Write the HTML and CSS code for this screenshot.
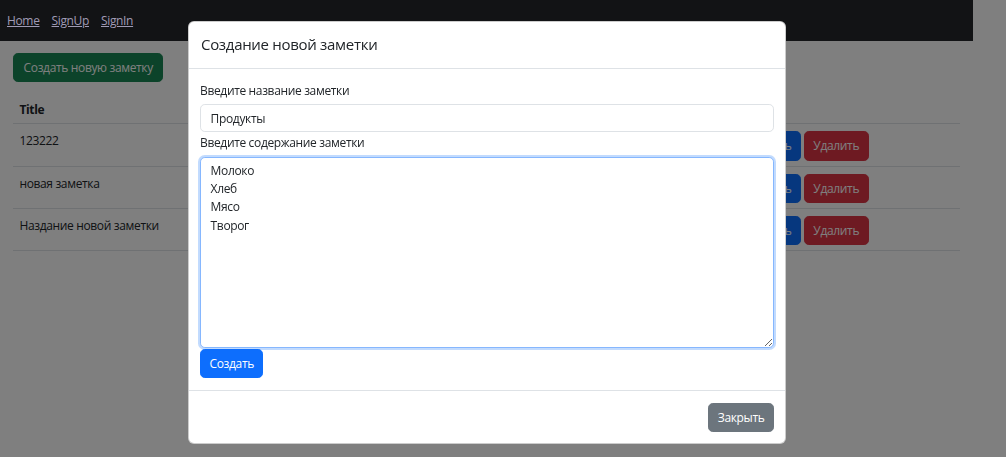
FILE: index.html
```html
<!DOCTYPE html>
<html lang="ru">
<head>
<meta charset="utf-8">
<title>Notes</title>
<link rel="stylesheet" href="styles.css">
</head>
<body>
<nav class="navbar">
  <a href="#" class="nav-link">Home</a>
  <a href="#" class="nav-link">SignUp</a>
  <a href="#" class="nav-link">SignIn</a>
</nav>
<main class="main">
  <button class="btn btn-success">Создать новую заметку</button>
  <table class="notes">
    <thead>
      <tr><th>Title</th><th class="actions"></th><th class="tail"></th></tr>
    </thead>
    <tbody>
      <tr><td>123222</td><td class="actions"><button class="btn btn-primary">Изменить</button> <button class="btn btn-danger">Удалить</button></td><td class="tail"></td></tr>
      <tr><td>новая заметка</td><td class="actions"><button class="btn btn-primary">Изменить</button> <button class="btn btn-danger">Удалить</button></td><td class="tail"></td></tr>
      <tr><td>Наздание новой заметки</td><td class="actions"><button class="btn btn-primary">Изменить</button> <button class="btn btn-danger">Удалить</button></td><td class="tail"></td></tr>
    </tbody>
  </table>
</main>
<div class="backdrop"></div>
<div class="modal">
  <div class="modal-header">
    <h5 class="modal-title">Создание новой заметки</h5>
  </div>
  <div class="modal-body">
    <label class="form-label">Введите название заметки</label>
    <input class="form-control" type="text" value="Продукты">
    <label class="form-label">Введите содержание заметки</label>
    <textarea class="form-control textarea">Молоко
Хлеб
Мясо
Творог</textarea>
    <button class="btn btn-primary btn-create">Создать</button>
  </div>
  <div class="modal-footer">
    <button class="btn btn-secondary">Закрыть</button>
  </div>
</div>
</body>
</html>
```

FILE: styles.css
```css
* { box-sizing: border-box; }
html, body {
  margin: 0;
  padding: 0;
  background: #ffffff;
  font-family: "Open Sans", "Noto Sans", sans-serif;
  font-size: 12px;
  letter-spacing: -0.35px;
  line-height: 19.2px;
  color: #212529;
  width: 1006px;
  height: 457px;
  overflow: hidden;
}

.navbar {
  position: relative;
  z-index: 20;
  width: 973px;
  height: 41px;
  background: #121315;
  display: flex;
  align-items: center;
  gap: 12px;
  padding-left: 7px;
}
.nav-link {
  color: #a09bb5;
  text-decoration: underline;
}

.main {
  width: 973px;
  padding: 12px 13px 0 13px;
}

.btn {
  display: inline-block;
  font-family: inherit;
  font-size: 12px;
  letter-spacing: -0.35px;
  line-height: 19.2px;
  padding: 4px 8.5px;
  border: 1px solid transparent;
  border-radius: 4.8px;
  color: #fff;
  cursor: pointer;
  vertical-align: top;
}
.btn-success { background: #198754; border-color: #198754; padding-left: 9.6px; padding-right: 9.6px; }
.btn-primary { background: #0d6efd; border-color: #0d6efd; }
.btn-danger { background: #dc3545; border-color: #dc3545; }
.btn-secondary { background: #6c757d; border-color: #6c757d; }

.notes {
  margin-top: 14px;
  width: 947px;
  border-collapse: collapse;
}
.notes th, .notes td {
  text-align: left;
  vertical-align: top;
  padding: 7px 6.4px 5px 6.4px;
  border-bottom: 1px solid #dee2e6;
}
.notes th { font-weight: 700; padding-top: 4px; padding-bottom: 4px; }
.notes td { height: 41px; }
.notes .actions { text-align: right; white-space: nowrap; }
.notes .tail { width: 85px; }

.backdrop {
  position: fixed;
  inset: 0;
  background: rgba(0, 0, 0, 0.5);
  z-index: 10;
}

.modal {
  position: absolute;
  z-index: 30;
  left: 188px;
  top: 21px;
  width: 598px;
  height: 423px;
  background: #fff;
  border: 1px solid rgba(0, 0, 0, 0.2);
  border-radius: 6px;
  display: flex;
  flex-direction: column;
}
.modal-header {
  height: 47px;
  padding: 0 12px;
  display: flex;
  align-items: center;
  border-bottom: 1px solid #dee2e6;
}
.modal-title {
  margin: 0;
  font-size: 15px;
  letter-spacing: -0.3px;
  font-weight: 500;
  line-height: 19px;
  color: #212529;
}
.modal-body {
  padding: 12.5px 11px 12px 11px;
  display: flex;
  flex-direction: column;
  align-items: flex-start;
}
.form-label {
  display: block;
  line-height: 19.2px;
  margin-bottom: 4px;
  color: #212529;
}
.form-control {
  display: block;
  width: 574px;
  height: 28px;
  padding: 4px 9.6px;
  font-family: inherit;
  font-size: 12px;
  letter-spacing: -0.35px;
  line-height: 18.4px;
  color: #212529;
  background: #fff;
  border: 1px solid #dee2e6;
  border-radius: 4.8px;
  outline: none;
}
.textarea {
  height: 191px;
  resize: vertical;
  border-color: #86b7fe;
  box-shadow: 0 0 0 2px rgba(13, 110, 253, 0.25);
  padding-top: 4px;
}
.btn-create { margin-top: 1px; }
.modal-body .form-control + .form-label { margin-top: 1px; }

.modal-footer {
  margin-top: auto;
  border-top: 1px solid #dee2e6;
  padding: 12px 11px 11px 11px;
  display: flex;
  justify-content: flex-end;
}
```
